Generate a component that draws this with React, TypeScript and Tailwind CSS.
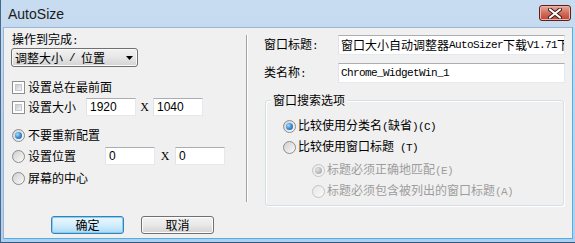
import React from 'react'

const isLatin = (s: string) => /^[\x20-\x7e]+$/.test(s)

// CJK glyphs in Noto, ASCII runs in a narrow mono like the SimSun latin half-width
function Mixed({ text }: { text: string }) {
  const parts = text.split(/([\x20-\x7e]+)/).filter((p) => p !== '')
  return (
    <>
      {parts.map((p, i) =>
        isLatin(p) ? (
          <span key={i} className="font-['Liberation_Mono',monospace] text-[11px] tracking-[-0.6px] whitespace-pre">
            {p}
          </span>
        ) : (
          <span key={i}>{p}</span>
        )
      )}
    </>
  )
}

const CheckBox = () => (
  <span className="w-[13px] h-[13px] border border-[#8e8f8f] bg-white p-[2px] flex shrink-0">
    <span className="flex-1 bg-linear-to-br from-[#c6cad0] to-[#f4f4f4] border border-[#c3c6cb]" />
  </span>
)

const Radio = (props: { checked?: boolean; disabled?: boolean }) => (
  <span
    className={
      props.disabled
        ? 'w-[13px] h-[13px] rounded-full border border-[#c4c4c4] bg-linear-to-br from-[#e6e6e6] to-[#fafafa] flex items-center justify-center shrink-0'
        : 'w-[13px] h-[13px] rounded-full border border-[#8c8c8c] bg-linear-to-br from-[#cfcfcf] to-[#fbfbfb] flex items-center justify-center shrink-0'
    }
  >
    {props.checked && props.disabled && (
      <span className="w-[7px] h-[7px] rounded-full bg-radial-[at_35%_35%] from-[#e4e4e4] to-[#9a9a9a]" />
    )}
    {props.checked && !props.disabled && (
      <span className="w-[7px] h-[7px] rounded-full bg-radial-[at_35%_35%] from-[#9fdcfc] via-[#3a8bd4] to-[#174f95]" />
    )}
  </span>
)

const fieldCls =
  'border border-t-[#abadb3] border-l-[#e2e3ea] border-r-[#e3e9ef] border-b-[#e3e9ef] bg-white flex items-center overflow-hidden whitespace-nowrap'

const Button = (props: { label: string; primary?: boolean; className?: string }) => (
  <div
    className={
      props.primary
        ? 'w-[73px] h-[18px] rounded-[3px] border border-[#3c7fb1] bg-linear-to-b from-[#eaf6fd] via-[#d4eefc] to-[#a9daf5] shadow-[inset_0_0_0_1px_#7fd0fb] flex items-center justify-center ' + (props.className || '')
        : 'w-[73px] h-[18px] rounded-[3px] border border-[#707070] bg-linear-to-b from-[#f3f3f3] via-[#e8e8e8] to-[#d2d2d2] shadow-[inset_0_0_0_1px_#fcfcfc] flex items-center justify-center ' + (props.className || '')
    }
  >
    {props.label}
  </div>
)

export default function App() {
  return (
    <div className="w-[575px] h-[243px] flex flex-col bg-linear-to-b from-[#c8dcf1] via-[#bcd3ec] to-[#b5cde8] border-l border-l-[#46698f] border-b border-b-[#2c5d8a] px-[2px] pb-[3px] font-['Noto_Sans_CJK_SC',sans-serif] text-[12px] text-[#000]">
      {/* title bar */}
      <div className="h-[27px] flex items-start shrink-0">
        <span className="mt-[6px] ml-[5px] font-['Liberation_Sans',sans-serif] text-[14px] leading-[17px] text-[#1b1b1b]">AutoSize</span>
        <div className="ml-auto mr-[2px] mt-[5px] w-[32px] h-[16px] rounded-[3px] border border-[#5f1e16] bg-linear-to-b from-[#e9a99c] via-[#d06e5c] to-[#c1412c] shadow-[inset_0_0_0_1px_#eab5aa] flex items-center justify-center">
          <svg width="14" height="11" viewBox="0 0 14 11">
            <path d="M2 1.5 L12 9.5 M12 1.5 L2 9.5" stroke="#3b1a15" strokeWidth="4" strokeLinecap="round" />
            <path d="M2 1.5 L12 9.5 M12 1.5 L2 9.5" stroke="#ffffff" strokeWidth="2.2" strokeLinecap="round" />
          </svg>
        </div>
      </div>

      {/* client area */}
      <div className="flex-1 flex flex-row bg-[#f0f0f0] border border-t-[#9bb6d4] border-l-[#9bb6d4] border-r-[#44b4ea] border-b-[#44b4ea] leading-[16px]">
        {/* left column */}
        <div className="w-[242px] pl-[7px] flex flex-col">
          <div className="mt-[3px] h-[16px] pl-[1px]">
            <Mixed text="操作到完成:" />
          </div>
          <div className="mt-[1px] w-[127px] h-[19px] rounded-[3px] border border-[#707070] bg-linear-to-b from-[#f2f2f2] via-[#e6e6e6] to-[#d3d3d3] shadow-[inset_0_0_0_1px_#fafafa] flex items-center pl-[3px]">
            <Mixed text="调整大小 / 位置" />
            <svg className="ml-auto mr-[4px]" width="7" height="4" viewBox="0 0 7 4">
              <path d="M0 0 H7 L3.5 4 Z" fill="#000" />
            </svg>
          </div>
          <div className="mt-[12px] h-[16px] flex items-center pl-[1px] gap-[3px]">
            <CheckBox />
            <span>设置总在最前面</span>
          </div>
          <div className="mt-[3px] h-[18px] flex items-center pl-[1px]">
            <CheckBox />
            <span className="w-[61px] pl-[3px]">设置大小</span>
            <div className={fieldCls + ' w-[50px] h-[18px] pl-[3px] font-[\'Liberation_Sans\',sans-serif] text-[12px]'}>1920</div>
            <span className="w-[17px] text-center font-['Liberation_Serif',serif] text-[12px]">X</span>
            <div className={fieldCls + ' w-[50px] h-[18px] pl-[3px] font-[\'Liberation_Sans\',sans-serif] text-[12px]'}>1040</div>
          </div>
          <div className="mt-[11px] h-[16px] flex items-center pl-[1px] gap-[3px]">
            <Radio checked />
            <span>不要重新配置</span>
          </div>
          <div className="mt-[4px] h-[18px] flex items-center pl-[1px]">
            <Radio />
            <span className="w-[80px] pl-[3px]">设置位置</span>
            <div className={fieldCls + ' w-[50px] h-[18px] pl-[3px] font-[\'Liberation_Sans\',sans-serif] text-[12px]'}>0</div>
            <span className="w-[20px] text-center font-['Liberation_Serif',serif] text-[12px]">X</span>
            <div className={fieldCls + ' w-[50px] h-[18px] pl-[3px] font-[\'Liberation_Sans\',sans-serif] text-[12px]'}>0</div>
          </div>
          <div className="mt-[5px] h-[16px] flex items-center pl-[1px] gap-[3px]">
            <Radio />
            <span>屏幕的中心</span>
          </div>
          <div className="mt-[30px] h-[18px] flex items-center pl-[40px]">
            <Button label="确定" primary />
            <Button label="取消" className="ml-[17px]" />
          </div>
        </div>

        {/* separator */}
        <div className="mt-[7px] h-[167px] w-[2px] border-l border-l-[#a0a0a0] border-r border-r-white" />

        {/* right column */}
        <div className="flex-1 flex flex-col">
          <div className="mt-[7px] h-[20px] flex items-center">
            <span className="w-[90px] pl-[16px]">
              <Mixed text="窗口标题:" />
            </span>
            <div className={fieldCls + ' w-[227px] h-[20px] pl-[2px]'}>
              <Mixed text="窗口大小自动调整器AutoSizer下载V1.71下载" />
            </div>
          </div>
          <div className="mt-[8px] h-[20px] flex items-center">
            <span className="w-[90px] pl-[16px]">
              <Mixed text="类名称:" />
            </span>
            <div className={fieldCls + ' w-[227px] h-[20px] pl-[2px]'}>
              <Mixed text="Chrome_WidgetWin_1" />
            </div>
          </div>
          <div className="mt-[17px] ml-[17px] w-[299px] h-[106px] relative rounded-[3px] border border-[#d5dfe5] shadow-[inset_1px_1px_0_#ffffff,1px_1px_0_#ffffff] flex flex-col">
            <span className="absolute -top-[9px] left-[5px] px-[2px] bg-[#f0f0f0]">窗口搜索选项</span>
            <div className="mt-[17px] h-[16px] flex items-center pl-[17px] gap-[2px]">
              <Radio checked />
              <span>
                <Mixed text="比较使用分类名(缺省)(C)" />
              </span>
            </div>
            <div className="mt-[5px] h-[16px] flex items-center pl-[17px] gap-[2px]">
              <Radio />
              <span>
                <Mixed text="比较使用窗口标题 (T)" />
              </span>
            </div>
            <div className="mt-[7px] h-[16px] flex items-center pl-[46px] gap-[2px] text-[#9d9d9d]">
              <Radio checked disabled />
              <span>
                <Mixed text="标题必须正确地匹配(E)" />
              </span>
            </div>
            <div className="mt-[5px] h-[16px] flex items-center pl-[46px] gap-[2px] text-[#9d9d9d]">
              <Radio disabled />
              <span>
                <Mixed text="标题必须包含被列出的窗口标题(A)" />
              </span>
            </div>
          </div>
        </div>
      </div>
    </div>
  )
}
